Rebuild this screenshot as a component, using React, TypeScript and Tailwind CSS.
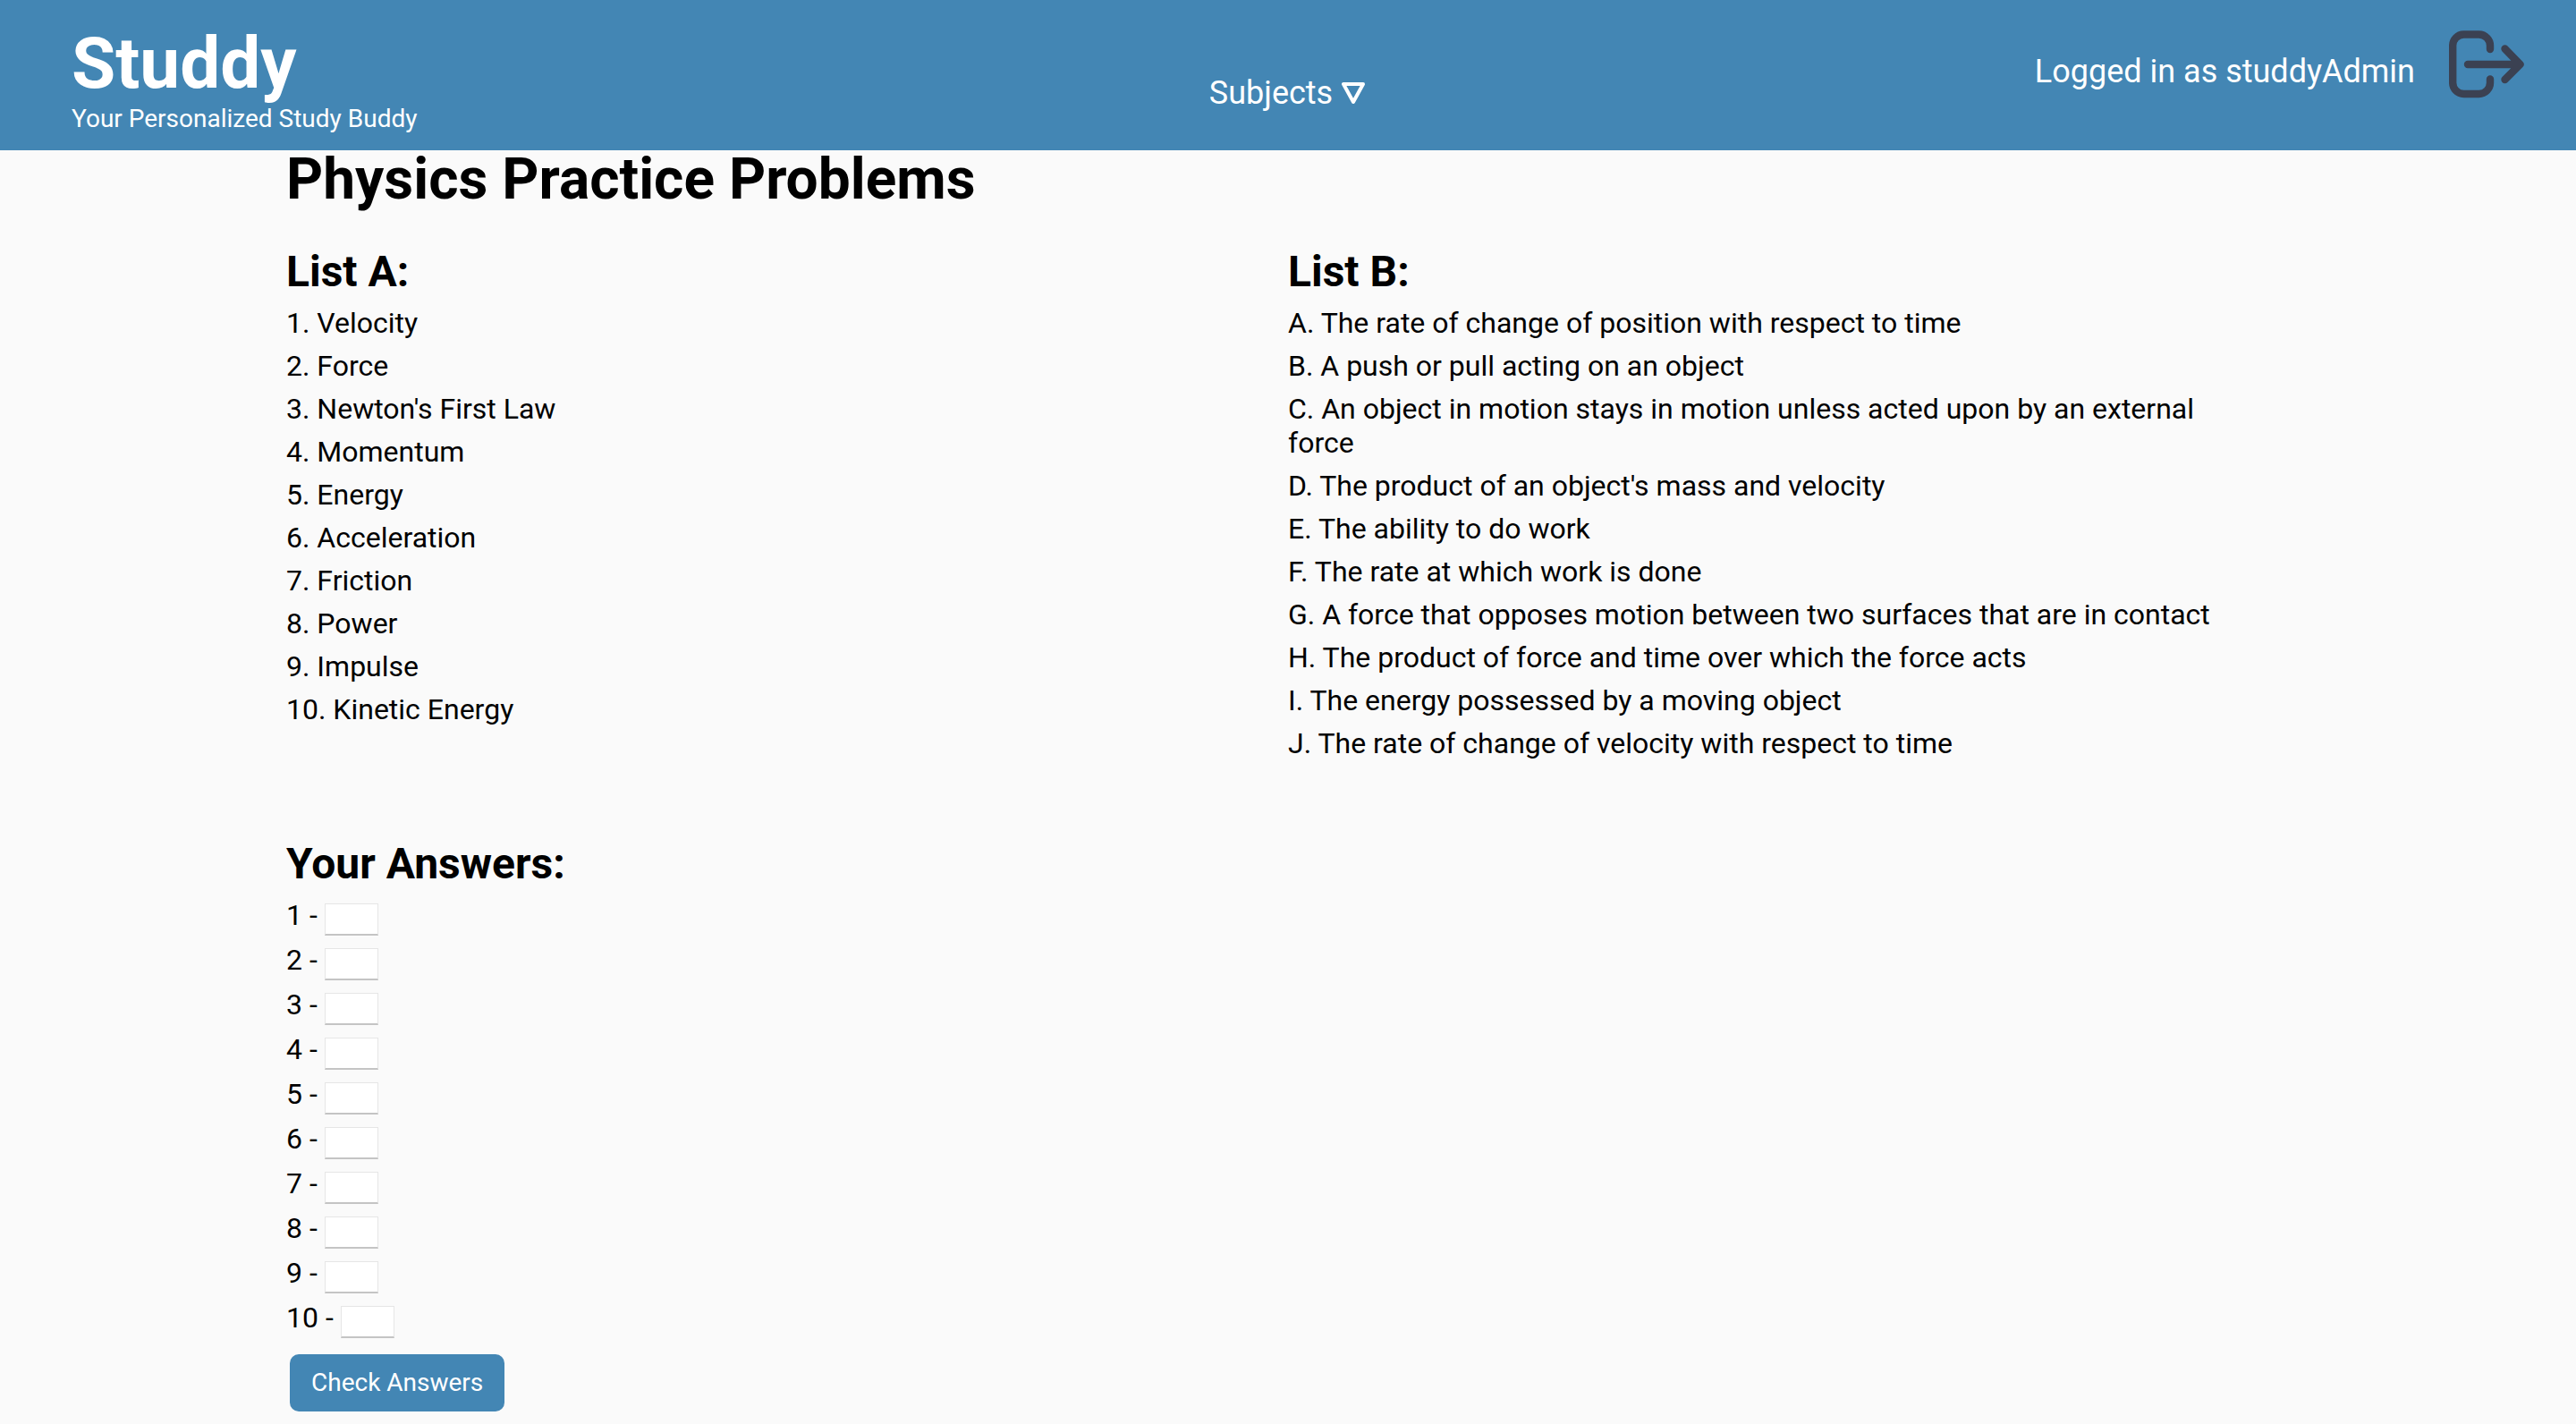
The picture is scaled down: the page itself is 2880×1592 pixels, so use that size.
const terms = [
  "Velocity",
  "Force",
  "Newton's First Law",
  "Momentum",
  "Energy",
  "Acceleration",
  "Friction",
  "Power",
  "Impulse",
  "Kinetic Energy",
];

const definitions = [
  "The rate of change of position with respect to time",
  "A push or pull acting on an object",
  "An object in motion stays in motion unless acted upon by an external force",
  "The product of an object's mass and velocity",
  "The ability to do work",
  "The rate at which work is done",
  "A force that opposes motion between two surfaces that are in contact",
  "The product of force and time over which the force acts",
  "The energy possessed by a moving object",
  "The rate of change of velocity with respect to time",
];

function LogoutIcon() {
  return (
    <svg
      viewBox="0 0 84 76"
      className="h-[76px] w-[84px]"
      fill="none"
      stroke="#3b4152"
      strokeWidth="8.4"
      strokeLinecap="round"
      strokeLinejoin="round"
      aria-hidden="true"
    >
      <path d="M46 21V17.5A12.5 12.5 0 0 0 33.5 4.5H16.5A12.5 12.5 0 0 0 4.2 17.5V58A12.5 12.5 0 0 0 16.5 71H33.5A12.5 12.5 0 0 0 46 58V54.5" />
      <path d="M21 38H79M62.5 20.5L79.5 38L62.5 55" />
    </svg>
  );
}

function Header() {
  return (
    <header className="grid h-[168px] grid-cols-3 bg-[#4386b4] text-white">
      <div className="pt-[25px] pl-20">
        <div className="text-[80px] leading-[92px] font-bold">Studdy</div>
        <p className="text-[28px] leading-8">Your Personalized Study Buddy</p>
      </div>
      <nav className="flex items-start justify-center pt-[83px]">
        <button type="button" className="flex items-center gap-2.5 text-[36px] leading-[42px]">
          Subjects
          <svg
            viewBox="0 0 28 26"
            className="h-[26px] w-7"
            fill="none"
            stroke="currentColor"
            strokeWidth="4"
            strokeLinejoin="round"
            aria-hidden="true"
          >
            <path d="M2 3H24L13 23Z" />
          </svg>
        </button>
      </nav>
      <div className="flex items-start justify-end gap-[38px] pt-[34px] pr-[58px]">
        <p className="pt-[25px] text-[36px] leading-[42px]">Logged in as studdyAdmin</p>
        <button type="button" aria-label="Log out">
          <LogoutIcon />
        </button>
      </div>
    </header>
  );
}

export default function App() {
  return (
    <div className="min-h-screen bg-[#fafafa] font-[Roboto,sans-serif] text-[32px] leading-[38px] text-black">
      <Header />
      <main className="px-80 pb-4">
        <h1 className="text-[64px] leading-[66px] font-bold">Physics Practice Problems</h1>
        <div className="mt-[42px] grid grid-cols-2">
          <section>
            <h2 className="mb-2.5 text-[48px] leading-[56px] font-bold">List A:</h2>
            <ul>
              {terms.map((term, i) => (
                <li key={term} className="mb-2.5">
                  {`${i + 1}. ${term}`}
                </li>
              ))}
            </ul>
          </section>
          <section className="pr-12">
            <h2 className="mb-2.5 text-[48px] leading-[56px] font-bold">List B:</h2>
            <ul>
              {definitions.map((definition, i) => (
                <li key={definition} className="mb-2.5">
                  {`${String.fromCharCode(65 + i)}. ${definition}`}
                </li>
              ))}
            </ul>
          </section>
        </div>
        <form className="mt-[78px]" onSubmit={(e) => e.preventDefault()}>
          <h2 className="mb-2.5 text-[48px] leading-[56px] font-bold">Your Answers:</h2>
          {terms.map((term, i) => (
            <div key={term} className="mb-2 flex gap-2">
              <label htmlFor={`answer-${i + 1}`}>{`${i + 1} -`}</label>
              <input
                id={`answer-${i + 1}`}
                type="text"
                maxLength={1}
                className="mt-1.5 h-9 w-[60px] border border-b-2 border-[#e6e6e6] border-b-[#c4c4c4] bg-white px-2 text-[24px] outline-none"
              />
            </div>
          ))}
          <button
            type="submit"
            className="mt-2.5 ml-1 h-16 rounded-[10px] bg-[#4386b4] px-6 text-[28px] leading-8 text-white"
          >
            Check Answers
          </button>
        </form>
      </main>
    </div>
  );
}
